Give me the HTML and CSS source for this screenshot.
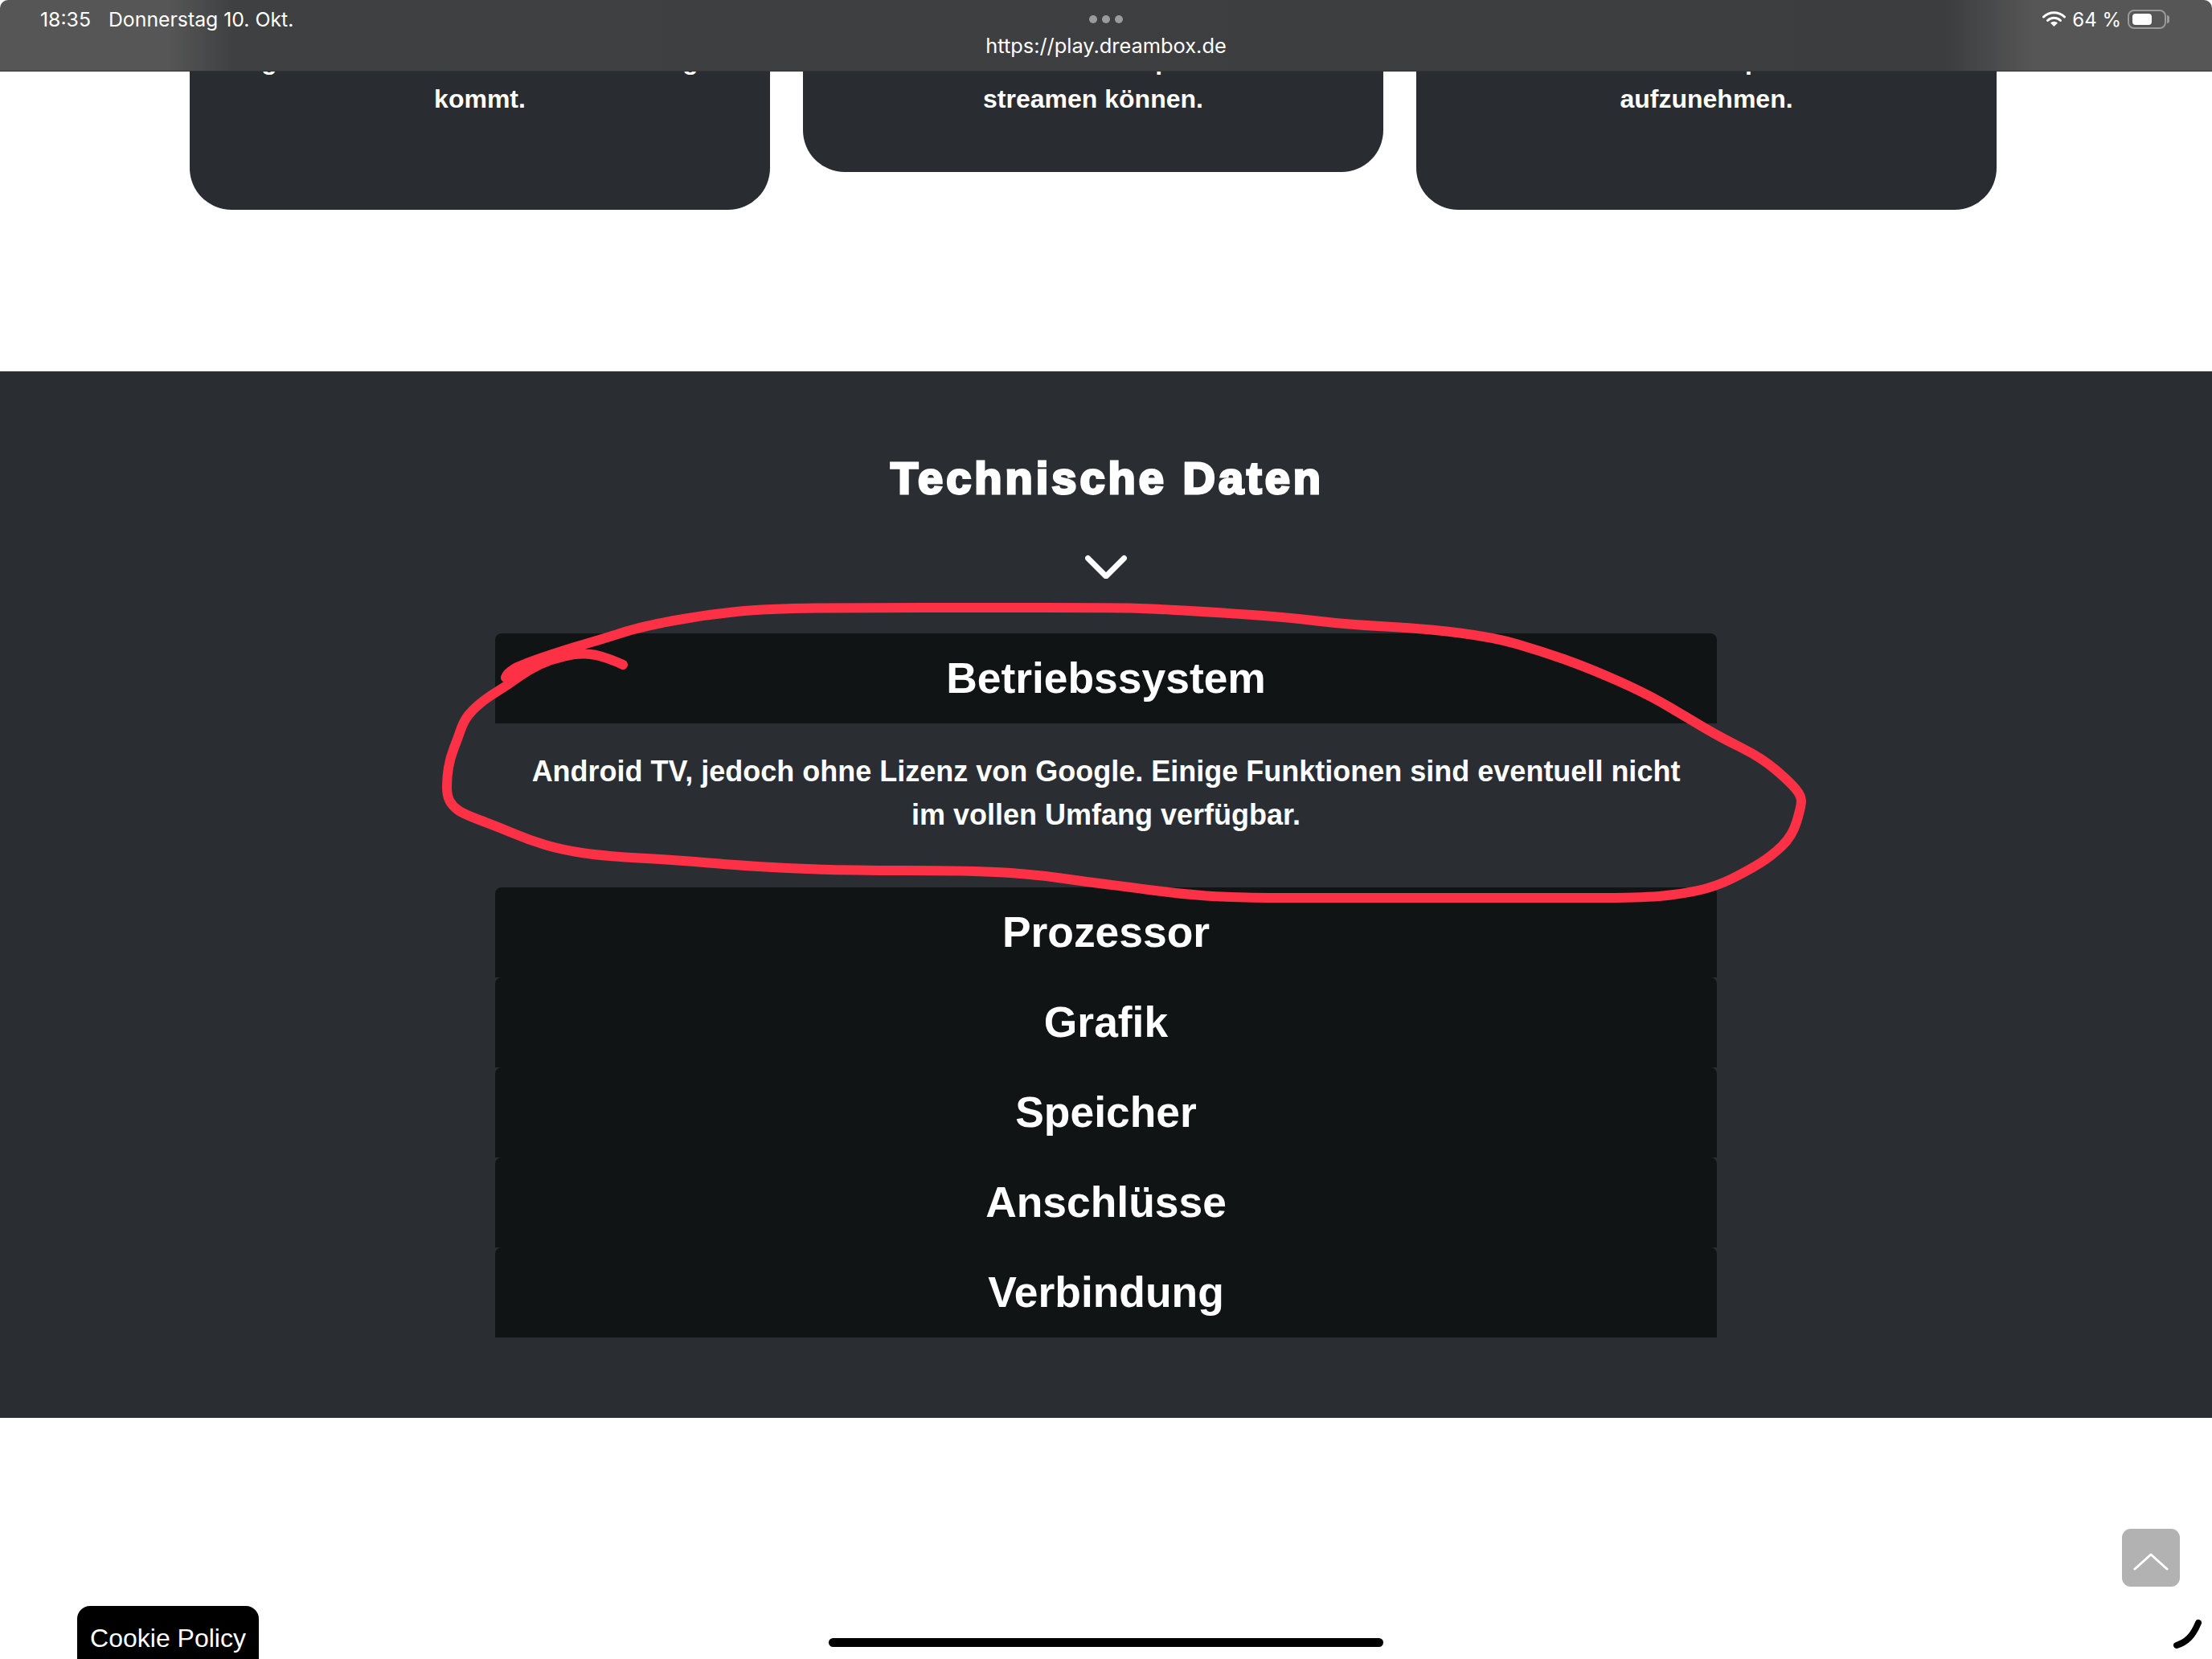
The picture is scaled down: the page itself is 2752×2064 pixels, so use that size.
FILE: index.html
```html
<!DOCTYPE html>
<html lang="de">

<head>
    <meta charset="UTF-8">
    <title>Dreambox Play</title>
    <link rel="stylesheet" href="styles.css">
</head>

<body>
    <header class="statusbar">
        <div class="status-left">
            <span>18:35</span>
            <span>Donnerstag 10. Okt.</span>
        </div>
        <div class="status-center">
            <div class="dots"><i></i><i></i><i></i></div>
            <span class="url">https://play.dreambox.de</span>
        </div>
        <div class="status-right">
            <svg class="wifi" width="29" height="19" viewBox="0 0 29 19">
                <path d="M1.5 7A18.500 18.500 0 0 1 27.500 7" fill="none" stroke="#fff" stroke-width="3" stroke-linecap="round"/>
                <path d="M6.500 11.500A11.500 11.500 0 0 1 22.500 11.500" fill="none" stroke="#fff" stroke-width="3" stroke-linecap="round"/>
                <path d="M14.500 19L10 14.500A6.500 6.500 0 0 1 19 14.500Z" fill="#fff"/>
            </svg>
            <span class="percent">64 %</span>
            <div class="battery"><div class="battery-fill"></div></div>
        </div>
    </header>

    <div class="cards">
        <div class="card card-tall">
            <p>gutes Bild und Ton bei Ihnen richtig</p>
            <p>kommt.</p>
        </div>
        <div class="card">
            <p>Sie Filme ohne Kabel per Internet</p>
            <p>streamen können.</p>
        </div>
        <div class="card card-tall">
            <p>Ihre Filme sowie Serien per Klick auf USB</p>
            <p>aufzunehmen.</p>
        </div>
    </div>

    <section class="specs">
        <h2>Technische Daten</h2>
        <svg class="specs-arrow" width="52" height="30" viewBox="0 0 52 30">
            <path d="M3.500 4.500L26 27L48.500 4.500" fill="none" stroke="#fff" stroke-width="7" stroke-linecap="round" stroke-linejoin="round"/>
        </svg>
        <div class="accordion">
            <h3 class="acc-title">Betriebssystem</h3>
            <p class="acc-body">Android TV, jedoch ohne Lizenz von Google. Einige Funktionen sind eventuell nicht im vollen Umfang verfügbar.</p>
            <h3 class="acc-title">Prozessor</h3>
            <h3 class="acc-title">Grafik</h3>
            <h3 class="acc-title">Speicher</h3>
            <h3 class="acc-title">Anschlüsse</h3>
            <h3 class="acc-title">Verbindung</h3>
        </div>
    </section>

    <a class="cookie">Cookie Policy</a>

    <div class="to-top">
        <svg width="44" height="22" viewBox="0 0 44 22">
            <path d="M2 20L22 2L42 20" fill="none" stroke="#fff" stroke-width="3" stroke-linecap="round" stroke-linejoin="round"/>
        </svg>
    </div>

    <div class="home-bar"></div>

    <!-- pen marks on top of the screenshot -->
    <svg class="ink" width="2752" height="2064" viewBox="0 0 2752 2064">
        <path class="ink-red" d="M775 827Q760 820 750.500 817.500Q741 814 728 813.500Q715 813 700.500 817Q686 820 672 826.500Q658 833 645 842.500Q632 852 619 860Q606 868 597 875.500Q588 883 582.500 890Q577 897 573 908.500Q569 920 564.500 931.500Q560 943 558 955Q556 967 556 978.500Q556 990 559.500 996.500Q563 1003 570 1008Q577 1013 597.500 1020.500Q618 1028 638 1036.500Q658 1045 678 1051Q698 1057 724 1061Q750 1065 795.500 1067.500Q841 1070 881.500 1073.500Q922 1077 979.500 1080Q1037 1083 1123 1083Q1209 1083 1249 1085.500Q1289 1088 1323.500 1093Q1358 1098 1379 1100.500Q1400 1103 1433 1107.500Q1466 1112 1500.500 1114.500Q1535 1117 1600 1117L1980 1117Q2040 1117 2064.500 1115Q2089 1113 2112 1108Q2135 1103 2155 1093Q2175 1083 2189.500 1074Q2204 1065 2217 1052.500Q2230 1040 2235.500 1021.500Q2241 1003 2241 996.500Q2241 990 2234 981.500Q2227 973 2209.500 958Q2192 943 2166 930Q2140 917 2123 907Q2106 897 2077.500 880Q2049 863 2011.500 846.500Q1974 830 1945.500 820Q1917 810 1888 801.500Q1859 793 1816 787.500Q1773 782 1724.500 779.500Q1676 777 1638.500 772.500Q1601 768 1558 765Q1515 762 1472 759.500Q1429 757 1405 756.500Q1381 756 1300 756L1150 756Q1094 756 1025 756.500Q956 757 916 761Q876 765 836 772.500Q796 780 773 787.500Q750 795 727 801.500Q704 808 675 818Q646 828 639 832.500Q632 837 630.500 840L629 843"/>
        <path class="ink-black" d="M2708 2047C2720 2043 2728 2036 2735 2019"/>
    </svg>
</body>

</html>
```

FILE: styles.css
```css
* {
    padding: 0;
    margin: 0;
    box-sizing: border-box;
}

html {
    overflow: hidden;
}

body {
    position: relative;
    width: 2752px;
    height: 2064px;
    overflow: hidden;
    background: #fff;
    color: #fff;
    font-family: "Liberation Sans", Arial, sans-serif;
}

.statusbar {
    position: absolute;
    top: 0;
    left: 0;
    right: 0;
    z-index: 5;
    height: 89px;
    display: grid;
    grid-template-columns: 1fr auto 1fr;
    font-family: Inter, "Noto Sans", sans-serif;
    font-size: 24.800px;
    background: linear-gradient(to right, #565656 0, #565656 210px, #3f4042 290px, #3c3d3f 2420px, #565656 2530px);
    border-bottom: 1px solid #333;
    border-radius: 10px 10px 0 0;
}

.status-left {
    display: flex;
    gap: 22px;
    padding: 9px 0 0 50px;
}

.status-center {
    display: flex;
    flex-direction: column;
    align-items: center;
    padding-top: 19px;
}

.dots {
    display: flex;
    gap: 6px;
}

.dots i {
    display: block;
    width: 10px;
    height: 10px;
    border-radius: 50%;
    background: #9b9b9c;
}

.url {
    margin-top: 12px;
    font-size: 25.400px;
}

.status-right {
    display: flex;
    justify-content: flex-end;
    align-items: flex-start;
    padding: 12px 57px 0 0;
}

.wifi {
    margin: 2px 8px 0 0;
}

.percent {
    margin-right: 8px;
    font-size: 24px;
    line-height: 26px;
}

.battery {
    position: relative;
    width: 48px;
    height: 24px;
    padding: 3px 4px;
    border: 2px solid #9a9a9a;
    border-radius: 8px;
}

.battery::after {
    content: "";
    position: absolute;
    top: 5px;
    right: -6px;
    width: 3px;
    height: 10px;
    border-radius: 0 3px 3px 0;
    background: #9a9a9a;
}

.battery-fill {
    width: 24px;
    height: 100%;
    border-radius: 4px;
    background: #fff;
}

.cards {
    display: flex;
    align-items: flex-start;
    gap: 41px;
    height: 462px;
    padding-left: 236px;
}

.card {
    width: 722px;
    padding: 51px 20px 67px;
    border-radius: 0 0 52px 52px;
    background: #292c30;
    font-size: 32px;
    font-weight: bold;
    line-height: 48px;
    text-align: center;
}

.card-tall {
    padding-bottom: 114px;
}

.specs {
    height: 1302px;
    padding-top: 101px;
    background: #2a2e33;
    text-align: center;
}

.specs h2 {
    padding-left: 3px;
    font-size: 56px;
    line-height: 64px;
    letter-spacing: 4px;
    -webkit-text-stroke: 3px #fff;
}

.specs-arrow {
    display: block;
    margin: 63px auto 0;
}

.accordion {
    width: 1520px;
    margin: 68px auto 0;
}

.acc-title {
    display: flex;
    align-items: center;
    justify-content: center;
    height: 112px;
    padding-bottom: 1px;
    border-radius: 8px 8px 0 0;
    background: #101415;
    font-size: 53.400px;
}

.acc-body {
    padding: 33px 32px 63px;
    font-size: 36px;
    font-weight: bold;
    line-height: 54px;
}

.cookie {
    position: absolute;
    left: 96px;
    bottom: 0;
    width: 226px;
    height: 66px;
    padding-top: 22px;
    border-radius: 16px 16px 0 0;
    background: #000;
    font-size: 32px;
    line-height: 37px;
    text-align: center;
}

.to-top {
    position: absolute;
    left: 2640px;
    top: 1902px;
    width: 72px;
    height: 72px;
    padding-top: 30px;
    border-radius: 11px;
    background: #b2b2b2;
    text-align: center;
}

.home-bar {
    position: absolute;
    left: 1031px;
    top: 2038px;
    width: 690px;
    height: 11px;
    border-radius: 6px;
    background: #000;
}

.ink {
    position: absolute;
    top: 0;
    left: 0;
    z-index: 4;
    pointer-events: none;
}

.ink-red {
    fill: none;
    stroke: #fd3146;
    stroke-width: 12;
    stroke-linecap: round;
    stroke-linejoin: round;
}

.ink-black {
    fill: none;
    stroke: #000;
    stroke-width: 8;
    stroke-linecap: round;
}
```
